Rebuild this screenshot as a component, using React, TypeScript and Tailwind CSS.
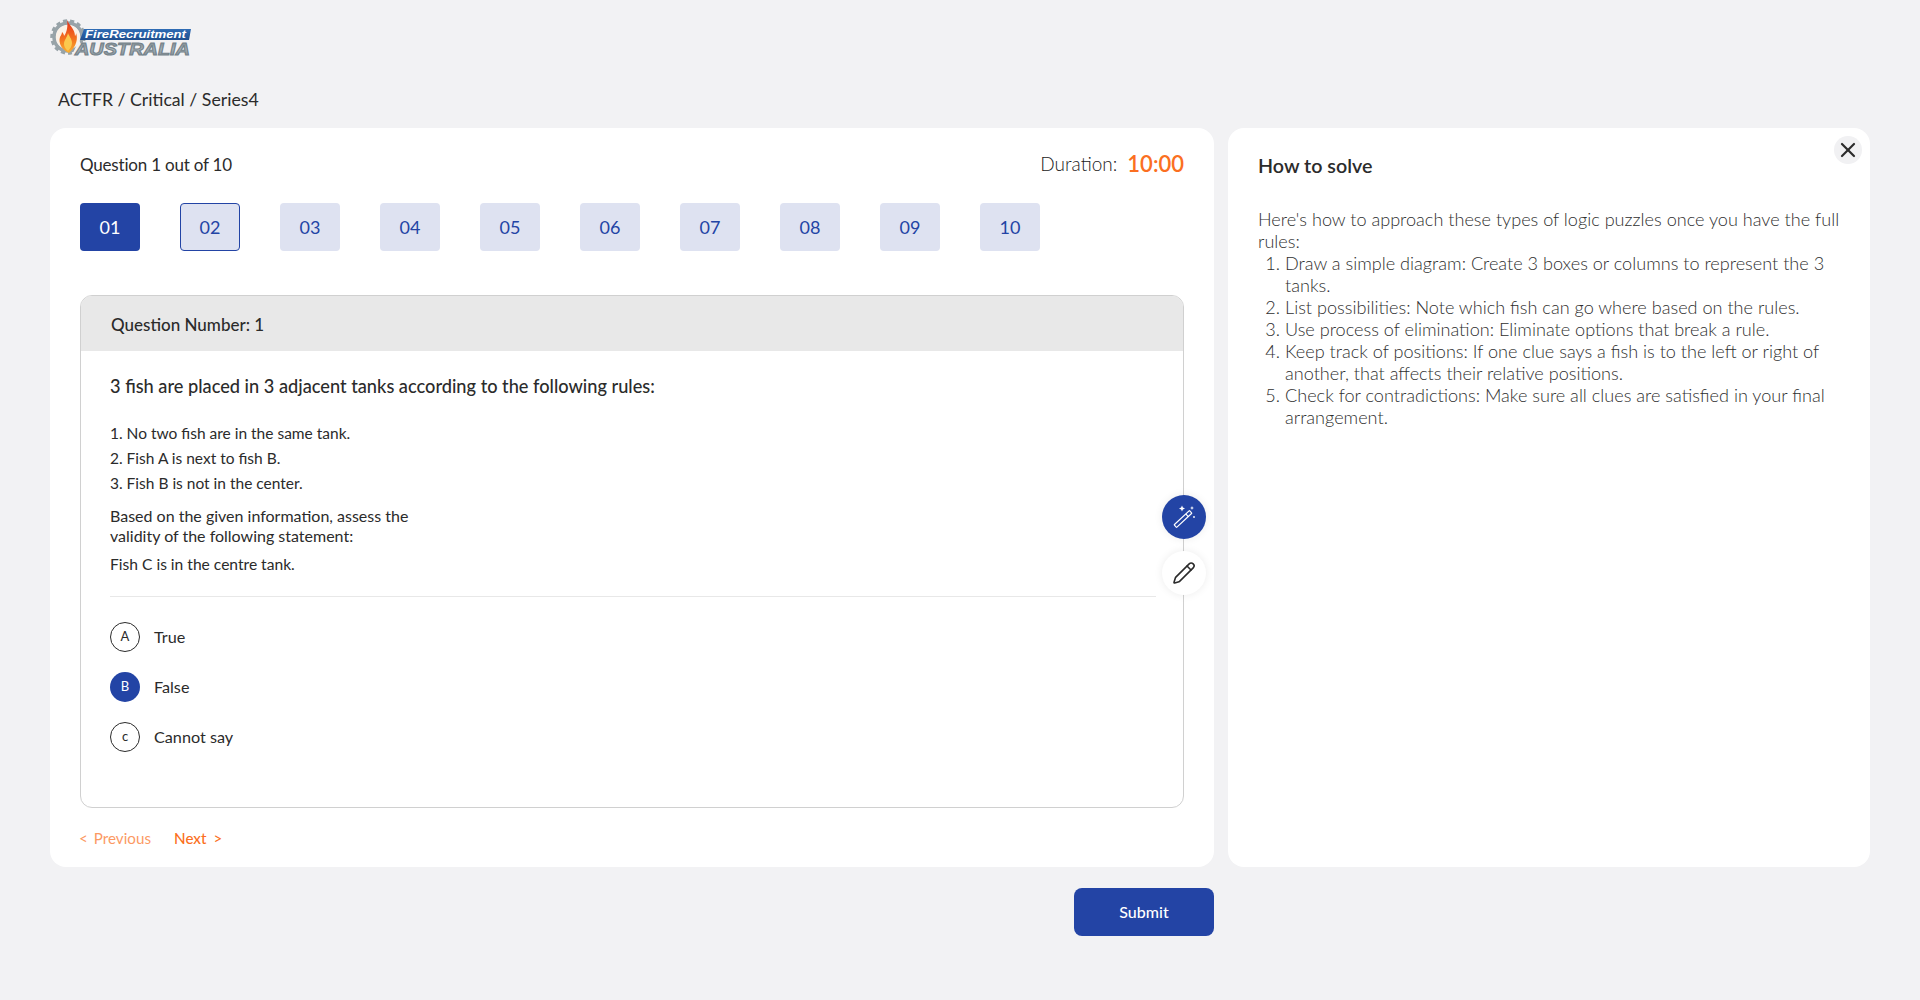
import { Pencil, X } from 'lucide-react';

const numbers = ['01', '02', '03', '04', '05', '06', '07', '08', '09', '10'];

const rules = ['1. No two fish are in the same tank.', '2. Fish A is next to fish B.', '3. Fish B is not in the center.'];

const options = [
  { key: 'A', label: 'True' },
  { key: 'B', label: 'False', selected: true },
  { key: 'c', label: 'Cannot say' },
];

const steps = [
  'Draw a simple diagram: Create 3 boxes or columns to represent the 3 tanks.',
  'List possibilities: Note which fish can go where based on the rules.',
  'Use process of elimination: Eliminate options that break a rule.',
  'Keep track of positions: If one clue says a fish is to the left or right of another, that affects their relative positions.',
  'Check for contradictions: Make sure all clues are satisfied in your final arrangement.',
];

function Logo() {
  return (
    <svg width="142" height="40" viewBox="0 0 142 40" className="-ml-px block">
      <defs>
        <linearGradient id="steel" x1="0" y1="0" x2="0" y2="1">
          <stop offset="0" stopColor="#6f7c82" />
          <stop offset="0.5" stopColor="#aab5ba" />
          <stop offset="1" stopColor="#76838a" />
        </linearGradient>
        <linearGradient id="flame" x1="0" y1="0" x2="0" y2="1">
          <stop offset="0" stopColor="#e5301a" />
          <stop offset="0.6" stopColor="#f4761f" />
          <stop offset="1" stopColor="#f9b233" />
        </linearGradient>
        <linearGradient id="banner" x1="0" y1="0" x2="0" y2="1">
          <stop offset="0" stopColor="#2f6cb5" />
          <stop offset="1" stopColor="#1f4f8f" />
        </linearGradient>
      </defs>
      {/* Zupcanik otvoren prema desno dolje */}
      <circle cx="19" cy="19" r="16" fill="none" stroke="#98a3a8" strokeWidth="3.5" strokeDasharray="4 3" />
      <circle cx="19" cy="19" r="14" fill="none" stroke="#98a3a8" strokeWidth="3.5" />
      <circle cx="19" cy="19" r="12" fill="#fbf1e6" />
      <path d="M18 2c2 5 8 9 8 16 1-1 1-2 1-3 2 5 1 13-7 20-7-3-11-10-9-16 1-2 2-3 2-5 1 1 2 2 2 4 3-4 4-10 3-16z" fill="url(#flame)" />
      <path d="M19 15c1 3 4 6 4 10 0 3-2 6-4 8-3-2-4-5-4-7 0-4 3-6 4-11z" fill="#fbc94e" />
      <path d="M30 22l6 13H24z" fill="#f2f2f4" />
      <path d="M35 11h107l-2 11H31z" fill="url(#banner)" />
      <text x="36" y="19.5" fontFamily="Liberation Sans, sans-serif" fontStyle="italic" fontWeight="700" fontSize="11" fill="#ffffff" textLength="101" lengthAdjust="spacingAndGlyphs">
        FireRecruitment
      </text>
      <text x="26" y="37" fontFamily="Liberation Sans, sans-serif" fontStyle="italic" fontWeight="700" fontSize="16.5" fill="url(#steel)" textLength="115" lengthAdjust="spacingAndGlyphs" stroke="#75828a" strokeWidth="1">
        AUSTRALIA
      </text>
    </svg>
  );
}

function WandIcon() {
  return (
    <svg width="24" height="24" viewBox="0 0 24 24" fill="none" stroke="currentColor" strokeWidth="1.2">
      <g transform="rotate(-43 11 14)">
        <rect x="0.5" y="12.2" width="21" height="3.6" rx="0.5" />
        <path d="M16.5 12.2v3.6" />
      </g>
      <path d="M10 0.5l0.9 2.1 2.1 0.9-2.1 0.9-0.9 2.1-0.9-2.1-2.1-0.9 2.1-0.9z" fill="currentColor" stroke="none" />
      <path d="M20 1l0.6 1.4 1.4 0.6-1.4 0.6-0.6 1.4-0.6-1.4-1.4-0.6 1.4-0.6z" fill="currentColor" stroke="none" />
      <circle cx="22" cy="12" r="0.9" fill="currentColor" stroke="none" />
    </svg>
  );
}

export default function App() {
  return (
    <div className="min-h-[1000px] bg-[#f2f2f4] pl-[50px] pr-[50px] pt-[18px] font-['Lato',sans-serif] text-[#2b2b2b]">
      <Logo />

      <h1 className="mt-[30px] pl-[8px] text-[17.7px] leading-[24px] text-[#2b2b2b]">ACTFR / Critical / Series4</h1>

      <div className="mt-[16px] flex gap-[14px]">
        {/* Glavna kartica s pitanjem */}
        <div className="relative h-[739px] w-[1164px] rounded-[16px] bg-white px-[30px] pt-[19px]">
          <div className="flex h-[34px] items-center justify-between">
            <span className="pt-[2px] text-[17px] tracking-[-0.2px]">Question 1 out of 10</span>
            <div className="flex items-center gap-[10px]">
              <span className="text-[19px] font-light text-[#222222]">Duration:</span>
              <span className="text-[22px] font-semibold leading-none text-[#fb6f21]">10:00</span>
            </div>
          </div>

          <div className="mt-[22px] flex gap-[40px]">
            {numbers.map((n, i) => (
              <button
                key={n}
                className={
                  i === 0
                    ? 'h-[48px] w-[60px] rounded-[4px] bg-[#2344a5] text-[18px] text-white'
                    : i === 1
                      ? 'h-[48px] w-[60px] rounded-[4px] border border-[#2344a5] bg-[#dee2f1] text-[18px] text-[#2344a5]'
                      : 'h-[48px] w-[60px] rounded-[4px] bg-[#dee2f1] text-[18px] text-[#2344a5]'
                }
              >
                {n}
              </button>
            ))}
          </div>

          <div className="mt-[44px] h-[513px] w-[1104px] overflow-hidden rounded-[12px] border border-[#d0d0d0]">
            <div className="flex h-[55px] items-center bg-[#e8e8e8] pl-[30px] pt-[2px] text-[17px] font-medium">Question Number: 1</div>
            <div className="px-[29px] pt-[23px]">
              <p className="text-[18.2px] font-medium leading-[24px]">3 fish are placed in 3 adjacent tanks according to the following rules:</p>
              <div className="mt-[23px] text-[15.5px] leading-[25px]">
                {rules.map((r) => (
                  <p key={r}>{r}</p>
                ))}
              </div>
              <p className="mt-[10px] text-[16px] leading-[20px]">
                Based on the given information, assess the
                <br />
                validity of the following statement:
              </p>
              <p className="mt-[8px] text-[15.6px] leading-[20px]">Fish C is in the centre tank.</p>
              <hr className="mt-[22px] w-[1046px] border-[#e8e8e8]" />
              <div className="mt-[25px] flex flex-col gap-[20px]">
                {options.map((o) => (
                  <div key={o.key} className="flex items-center gap-[14px]">
                    <span
                      className={
                        o.selected
                          ? 'flex h-[30px] w-[30px] items-center justify-center rounded-full bg-[#2344a5] text-[13px] text-white'
                          : 'flex h-[30px] w-[30px] items-center justify-center rounded-full border border-[#2b2b2b] text-[13px]'
                      }
                    >
                      {o.key}
                    </span>
                    <span className="text-[16.2px]">{o.label}</span>
                  </div>
                ))}
              </div>
            </div>
          </div>

          <div className="-ml-px mt-[18px] flex items-center text-[15.2px] leading-[24px] text-[#fb6f21]">
            <span className="flex gap-[6px] opacity-70">
              <span>&lt;</span>
              <span>Previous</span>
            </span>
            <span className="ml-[23px] flex gap-[7px]">
              <span className="font-medium">Next</span>
              <span>&gt;</span>
            </span>
          </div>

          {/* Plutajuci alati */}
          <button className="absolute left-[1112px] top-[367px] flex h-[44px] w-[44px] items-center justify-center rounded-full bg-[#2344a5] text-white shadow-[0_0_8px_rgba(0,0,0,0.08)]">
            <WandIcon />
          </button>
          <button className="absolute left-[1112px] top-[423px] flex h-[44px] w-[44px] items-center justify-center rounded-full bg-white text-[#2b2b2b] shadow-[0_0_8px_rgba(0,0,0,0.08)]">
            <Pencil size={24} strokeWidth={1.6} />
          </button>
        </div>

        {/* Panel s uputama */}
        <div className="relative h-[739px] w-[642px] rounded-[16px] bg-white pl-[30px] pr-[24px] pt-[24px]">
          <button className="absolute right-[8px] top-[8px] flex h-[28px] w-[28px] items-center justify-center rounded-full bg-[#f1f1f3] text-[#2b2b2b]">
            <X size={24} strokeWidth={2.2} />
          </button>
          <h2 className="text-[19.7px] font-semibold leading-[28px]">How to solve</h2>
          <p className="mt-[28px] text-[18.1px] font-light leading-[22px] text-[#2f2f2f]">
            Here's how to approach these types of logic puzzles once you have the full rules:
          </p>
          <ol className="list-decimal pl-[27px] text-[18.1px] font-light leading-[22px] text-[#2f2f2f]">
            {steps.map((s) => (
              <li key={s}>{s}</li>
            ))}
          </ol>
        </div>
      </div>

      <div className="mt-[21px] flex w-[1164px] justify-end">
        <button className="h-[48px] w-[140px] rounded-[8px] bg-[#2344a5] text-[16px] font-medium text-white">Submit</button>
      </div>
    </div>
  );
}
